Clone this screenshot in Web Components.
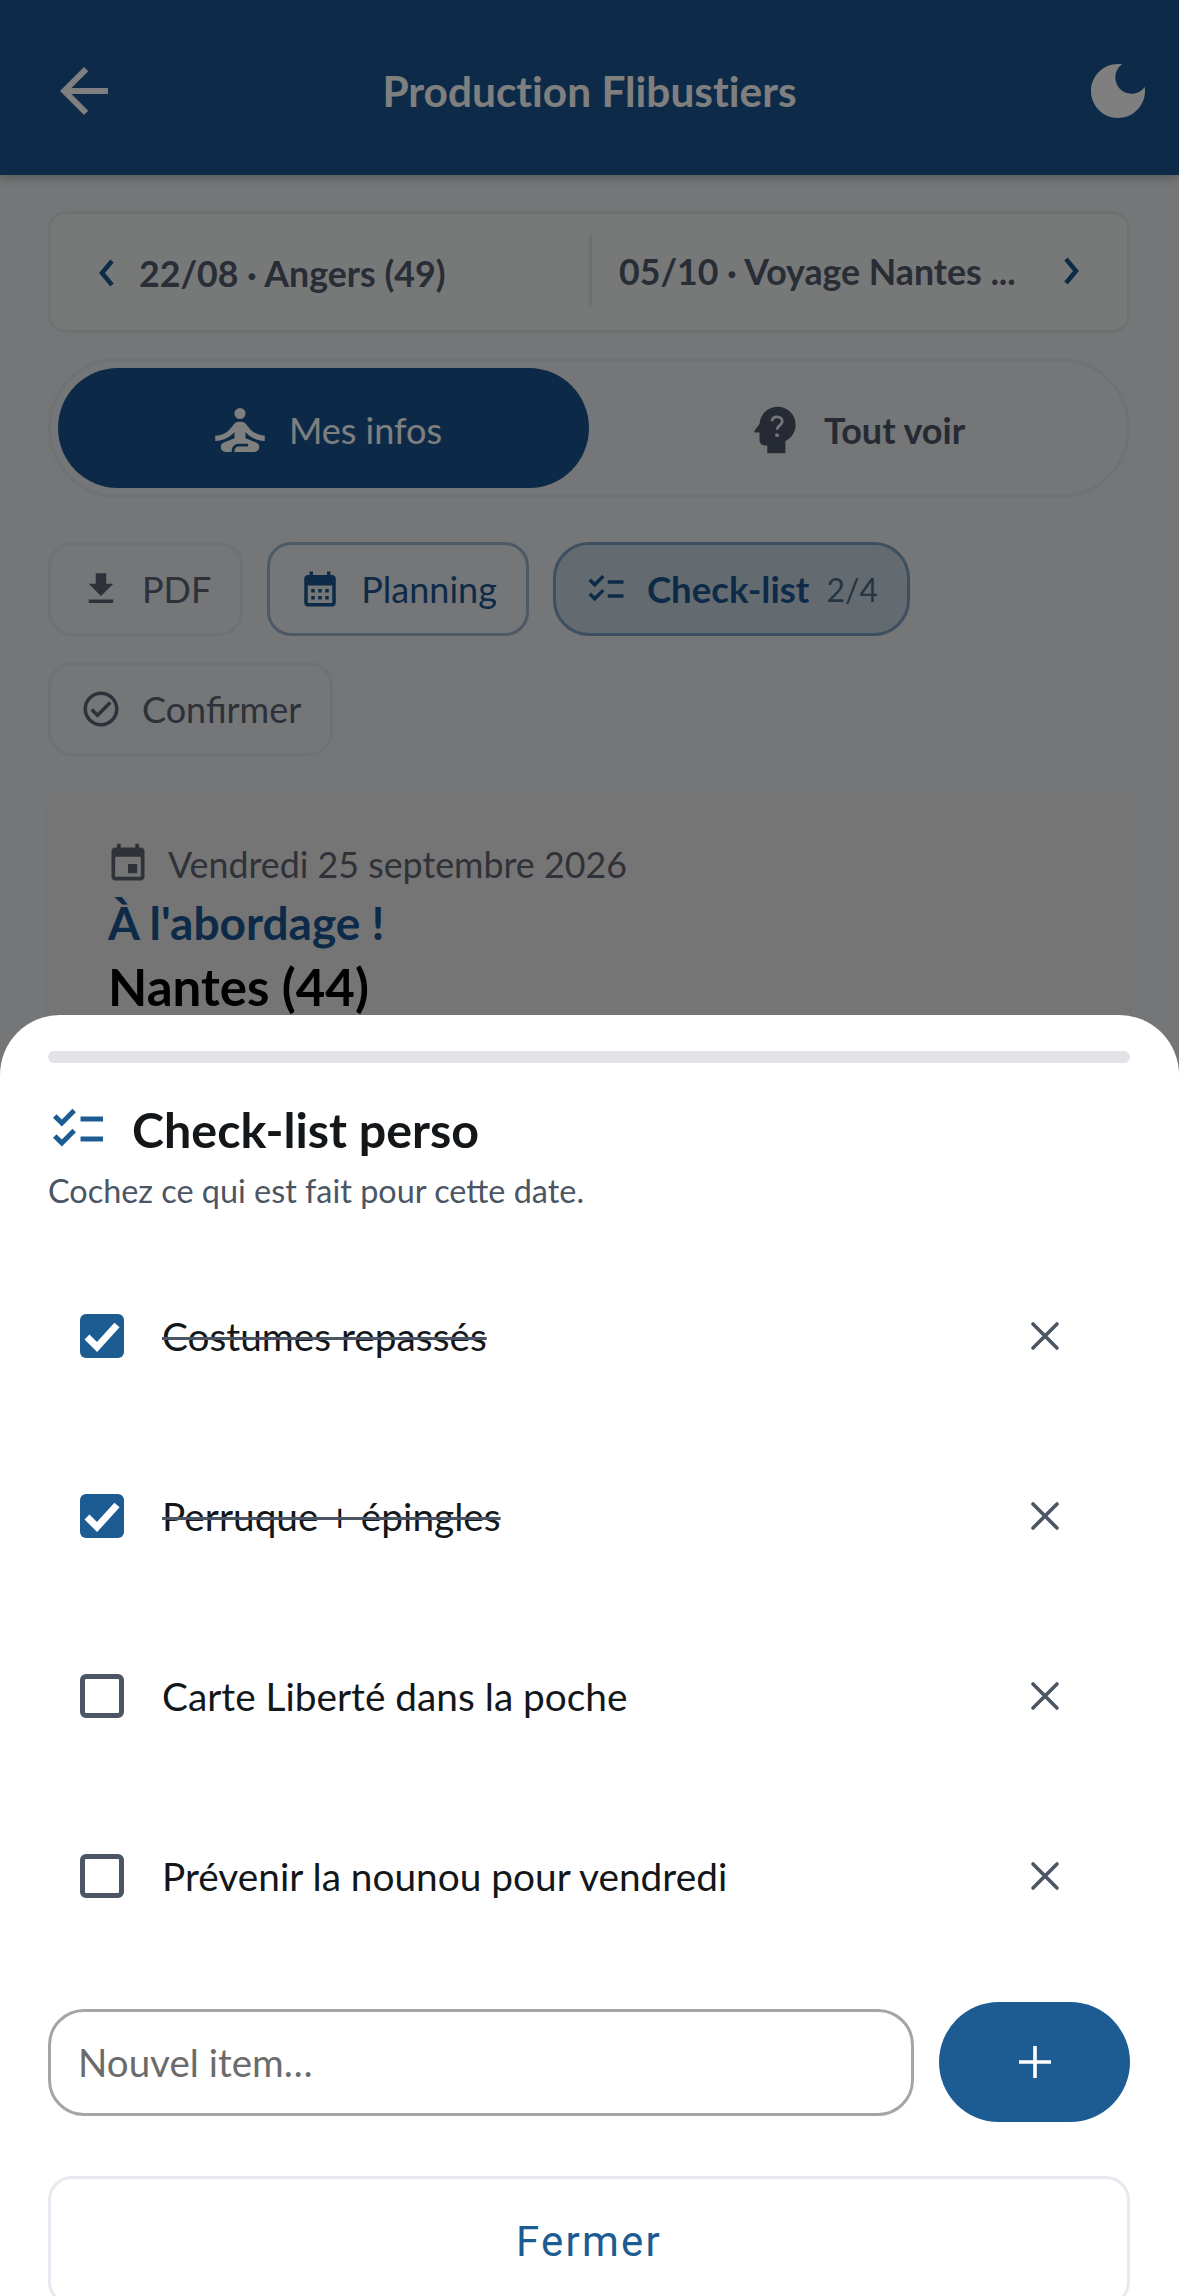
<!DOCTYPE html>
<html lang="fr">
<head>
<meta charset="utf-8">
<title>Production Flibustiers</title>
<style>
    html, body { margin: 0; padding: 0; }
    body { font-family: Lato, "Liberation Sans", sans-serif; background: #e9ecee; }
</style>
</head>
<body>
<screen-frame>
    <app-header slot="page" title="Production Flibustiers"></app-header>
    <date-nav slot="page" prev="22/08 · Angers (49)" next="05/10 · Voyage Nantes ..."></date-nav>
    <view-toggle slot="page"></view-toggle>
    <chip-row slot="page">
        <action-chip icon="download">PDF</action-chip>
        <action-chip icon="calendar" variant="outlined">Planning</action-chip>
        <action-chip icon="checklist" variant="active" count="2/4">Check-list</action-chip>
        <action-chip icon="confirm">Confirmer</action-chip>
    </chip-row>
    <event-card slot="page"
        date="Vendredi 25 septembre 2026"
        name="À l'abordage !"
        place="Nantes (44)"></event-card>

    <checklist-sheet slot="sheet">
        <check-row done>Costumes repassés</check-row>
        <check-row done>Perruque + épingles</check-row>
        <check-row>Carte Liberté dans la poche</check-row>
        <check-row>Prévenir la nounou pour vendredi</check-row>
    </checklist-sheet>
</screen-frame>

<script>
// material style icons, all on a 24 grid
const ICONS = {
    back: `<path d="M20 11H7.83l5.59-5.59L12 4l-8 8 8 8 1.41-1.41L7.83 13H20v-2z"/>`,
    moon: `<path d="M12 3c-4.97 0-9 4.03-9 9s4.03 9 9 9 9-4.03 9-9c0-.46-.04-.92-.1-1.36-.98 1.37-2.58 2.26-4.4 2.26-2.98 0-5.4-2.42-5.4-5.4 0-1.81.89-3.42 2.26-4.4-.44-.06-.9-.1-1.36-.1z"/>`,
    meditate: `<circle cx="12" cy="6" r="2"/><path d="M21 16v-2c-2.24 0-4.16-.96-5.6-2.68l-1.34-1.6c-.38-.46-.94-.72-1.53-.72h-1.05c-.59 0-1.15.26-1.53.72l-1.34 1.6C7.16 13.04 5.24 14 3 14v2c2.77 0 5.19-1.17 7-3.25V15l-3.88 1.55c-.67.27-1.12.93-1.12 1.66C5 19.2 5.8 20 6.79 20H9v-.5c0-1.38 1.12-2.5 2.5-2.5h3c.28 0 .5.22.5.5s-.22.5-.5.5h-3c-.83 0-1.5.67-1.5 1.5v.5h7.21c.99 0 1.79-.8 1.79-1.79 0-.73-.45-1.39-1.12-1.66L14 15v-2.25c1.81 2.08 4.23 3.25 7 3.25z"/>`,
    head: `<path d="M13 3C9.23 3 6.19 5.95 6 9.66L4.08 12.19c-.24.33 0 .81.42.81H6v3c0 1.1.9 2 2 2h1v3h7v-4.68C18.36 15.2 20 12.8 20 10c0-3.87-3.13-7-7-7z"/><path d="M10.8 8.6c.1-1 .9-1.7 2-1.7s2 .7 2 1.8c0 1.5-2 1.6-2 3.2" fill="none" stroke="#e9ecee" stroke-width="1.1"/><circle cx="12.8" cy="14" r=".75" fill="#e9ecee"/>`,
    download: `<path d="M19 9h-4V3H9v6H5l7 7 7-7zM5 18v2h14v-2H5z"/>`,
    calendar: `<path d="M19 4h-1V2h-2v2H8V2H6v2H5c-1.1 0-2 .9-2 2v14c0 1.1.9 2 2 2h14c1.1 0 2-.9 2-2V6c0-1.1-.9-2-2-2zm0 16H5V10h14v10zM9 14H7v-2h2v2zm4 0h-2v-2h2v2zm4 0h-2v-2h2v2zm-8 4H7v-2h2v2zm4 0h-2v-2h2v2zm4 0h-2v-2h2v2z"/>`,
    checklist: `<path d="M22 7h-9v2h9V7zm0 8h-9v2h9v-2zM5.54 11 2 7.46l1.41-1.41 2.12 2.12 4.24-4.24 1.41 1.41L5.54 11zm0 8L2 15.46l1.41-1.41 2.12 2.12 4.24-4.24 1.41 1.41L5.54 19z"/>`,
    confirm: `<path d="M12 2C6.48 2 2 6.48 2 12s4.48 10 10 10 10-4.48 10-10S17.52 2 12 2zm0 18c-4.41 0-8-3.59-8-8s3.59-8 8-8 8 3.59 8 8-3.59 8-8 8zm4.59-12.42L10 14.17l-2.59-2.58L6 13l4 4 8-8z"/>`,
    event: `<path d="M17 12h-5v5h5v-5zM16 1v2H8V1H6v2H5c-1.11 0-1.99.9-1.99 2L3 19c0 1.1.89 2 2 2h14c1.1 0 2-.9 2-2V5c0-1.1-.9-2-2-2h-1V1h-2zm3 18H5V8h14v11z"/>`,
};

function icon(name, size) {
    return `<svg width="${size}" height="${size}" viewBox="0 0 24 24" fill="currentColor" aria-hidden="true">${ICONS[name]}</svg>`;
}

// small helper, every element below has the same shadow setup
class ShadowElement extends HTMLElement {
    constructor() {
        super();
        this.attachShadow({ mode: "open" });
    }
    connectedCallback() {
        this.shadowRoot.innerHTML = this.render();
    }
}

/**
 * Whole screen: the dimmed page underneath, then the scrim and the sheet over it
 */
class ScreenFrame extends ShadowElement {
    render() {
        return `
        <style>
            :host { display: block; position: relative; width: 1179px; height: 2296px; overflow: hidden; }
            .scrim { position: absolute; inset: 0; background: rgba(0, 0, 0, .5); }
        </style>
        <slot name="page"></slot>
        <div class="scrim"></div>
        <slot name="sheet"></slot>`;
    }
}

class AppHeader extends ShadowElement {
    render() {
        return `
        <style>
            :host { display: grid; grid-template-columns: 72px 1fr 72px; align-items: center; box-sizing: border-box;
                height: 175px; padding: 6px 25px 0 48px; background: #1a5690; color: #fff;
                box-shadow: 0 3px 9px rgba(0, 0, 0, .25); }
            h1 { margin: 0 0 0 -23px; text-align: center; font-size: 42.4px; font-weight: 700; font-variant-ligatures: none; }
            svg { display: block; }
        </style>
        <span>${icon("back", 72)}</span>
        <h1>${this.getAttribute("title")}</h1>
        <span>${icon("moon", 72)}</span>`;
    }
}

class DateNav extends ShadowElement {
    render() {
        return `
        <style>
            :host { display: grid; grid-template-columns: 1fr 1fr; box-sizing: border-box; height: 122px;
                margin: 36px 49px 0 48px; align-items: center; background: #eef0f1;
                border: 3px solid #e1e3e5; border-radius: 18px;
                font-size: 35.7px; font-weight: 700; color: #515a6c; }
            div { display: flex; align-items: center; height: 72px; white-space: nowrap; }
            .prev { padding-left: 46px; gap: 22px; position: relative; top: 1px; }
            .next { padding-left: 27px; padding-right: 46px; justify-content: space-between; border-left: 3px solid #dcdfe2; position: relative; top: -1px; }
            svg { flex: none; color: #1a5690; }
        </style>
        <div class="prev">
            <svg width="20" height="34" viewBox="0 0 20 34" fill="none" stroke="currentColor" stroke-width="4.5"><path d="M15 5 5 17l10 12"/></svg>
            <span>${this.getAttribute("prev")}</span>
        </div>
        <div class="next">
            <span>${this.getAttribute("next")}</span>
            <svg width="20" height="34" viewBox="0 0 20 34" fill="none" stroke="currentColor" stroke-width="4.5"><path d="M5 5l10 12L5 29"/></svg>
        </div>`;
    }
}

class ViewToggle extends ShadowElement {
    render() {
        return `
        <style>
            :host { display: grid; grid-template-columns: 1fr 1fr; box-sizing: border-box; height: 140px;
                margin: 25px 49px 0 48px; padding: 7px; background: #e9ecee;
                border: 3px solid #dfe2e5; border-radius: 70px;
                font-size: 36px; font-weight: 700; color: #4d5568; }
            div { display: flex; align-items: center; justify-content: center; gap: 18px; padding-top: 3px; border-radius: 60px; }
            .on { background: #195590; color: #fff; font-weight: 400; gap: 16px; padding-left: 2px; }
            svg { display: block; }
        </style>
        <div class="on">${icon("meditate", 66)}<span>Mes infos</span></div>
        <div>${icon("head", 62)}<span>Tout voir</span></div>`;
    }
}

class ChipRow extends ShadowElement {
    render() {
        return `
        <style>
            :host { display: flex; flex-wrap: wrap; gap: 26px 24px; margin: 44px 49px 0 48px; }
        </style>
        <slot></slot>`;
    }
}

class ActionChip extends ShadowElement {
    render() {
        const count = this.getAttribute("count");
        return `
        <style>
            :host { display: inline-flex; align-items: center; gap: 20px; box-sizing: border-box; height: 94px;
                padding: 0 29px; background: #e9ecee; border: 3px solid #dfe2e5; border-radius: 24px;
                font-size: 36px; color: #5a6273; }
            :host([variant="outlined"]) { color: #1a5690; border-color: #9bb4cc; }
            :host([variant="active"]) { color: #1a5690; border-color: #7d9fbf; background: #c9d6e1; border-radius: 36px; font-weight: 700; font-size: 36.6px; }
            svg { display: block; }
            .count { margin-left: -3px; font-size: 32px; font-weight: 400; color: #4d6a86; }
        </style>
        ${icon(this.getAttribute("icon"), 42)}
        <span><slot></slot></span>
        ${count ? `<span class="count">${count}</span>` : ""}`;
    }
}

class EventCard extends ShadowElement {
    render() {
        return `
        <style>
            :host { display: block; box-sizing: border-box; margin: 37px 49px 0 49px; height: 600px; padding: 44px 59px;
                background: #ebebea; border-radius: 12px; box-shadow: 0 0 6px rgba(0, 0, 0, .05); }
            .date { display: flex; align-items: center; gap: 18px; margin-left: -2px; height: 54px; font-size: 35.8px; color: #5e6472; }
            svg { display: block; }
            h2, h3 { margin: 0; font-weight: 700; line-height: 64px; }
            h2 { font-size: 46px; color: #1a5690; }
            h3 { font-size: 51px; color: #000; }
        </style>
        <div class="date">${icon("event", 44)}<span>${this.getAttribute("date")}</span></div>
        <h2>${this.getAttribute("name")}</h2>
        <h3>${this.getAttribute("place")}</h3>`;
    }
}

class ChecklistSheet extends ShadowElement {
    render() {
        return `
        <style>
            :host { display: block; position: absolute; left: 0; right: 0; top: 1015px; bottom: 0; box-sizing: border-box;
                padding: 36px 49px 0 48px; background: #fff; border-radius: 60px 60px 0 0; overflow: hidden; color: #14171a; }
            .handle { height: 12px; border-radius: 6px; background: #e1e3e6; }
            .head { display: flex; align-items: center; gap: 24px; margin-top: 36px; height: 60px; }
            .head svg { display: block; color: #1d5c92; }
            h2 { margin: 0; font-size: 48.4px; font-weight: 700; }
            p { margin: 10px 0 0; font-size: 32.4px; line-height: 44px; color: #4b5563; }
            .list { display: block; margin-top: 33px; }
            add-item { margin-top: 36px; }
            button { display: block; box-sizing: border-box; width: 100%; height: 130px; margin-top: 54px;
                font: 400 42px Roboto, sans-serif; letter-spacing: 2.2px; color: #1d5c92;
                background: #fff; border: 3px solid #e6eaf0; border-radius: 24px; }
        </style>
        <div class="handle"></div>
        <div class="head">${icon("checklist", 60)}<h2>Check-list perso</h2></div>
        <p>Cochez ce qui est fait pour cette date.</p>
        <div class="list"><slot></slot></div>
        <add-item></add-item>
        <button>Fermer</button>`;
    }
}

class CheckRow extends ShadowElement {
    render() {
        return `
        <style>
            :host { display: flex; align-items: center; box-sizing: border-box; height: 180px; padding: 0 70px 0 32px; font-size: 38.8px; color: #14171a; }
            .box { flex: none; display: flex; box-sizing: border-box; width: 44px; height: 44px; margin-right: 38px;
                border: 5px solid #4b5563; border-radius: 6px; }
            :host([done]) .box { background: #1d5c92; border: 0; }
            :host([done]) .label { text-decoration: line-through; text-decoration-color: #4b5563; text-decoration-thickness: 3px; }
            .label { flex: 1; }
            svg { display: block; }
            .x { flex: none; color: #4b5563; }
        </style>
        <span class="box">${this.hasAttribute("done") ? `<svg width="44" height="44" viewBox="0 0 44 44" fill="none" stroke="#fff" stroke-width="7"><path d="M7 23l10 10L37 11"/></svg>` : ""}</span>
        <span class="label"><slot></slot></span>
        <svg class="x" width="30" height="30" viewBox="0 0 30 30" fill="none" stroke="currentColor" stroke-width="3.6" stroke-linecap="round"><path d="M3 3l24 24M27 3 3 27"/></svg>`;
    }
}

class AddItem extends ShadowElement {
    render() {
        return `
        <style>
            :host { display: flex; align-items: center; gap: 25px; }
            .field { flex: 1; box-sizing: border-box; height: 107px; padding: 0 27px; display: flex; align-items: center;
                border: 3px solid #a5a5a5; border-radius: 36px; font-size: 38.5px; color: #6b6b6b; background: #fff; }
            .add { flex: none; display: flex; align-items: center; justify-content: center; width: 191px; height: 120px;
                border-radius: 60px; background: #1d5c92; }
            svg { display: block; }
        </style>
        <div class="field">Nouvel item…</div>
        <div class="add"><svg width="34" height="34" viewBox="0 0 34 34" fill="none" stroke="#fff" stroke-width="3.6"><path d="M17 1v32M1 17h32"/></svg></div>`;
    }
}

customElements.define("screen-frame", ScreenFrame);
customElements.define("app-header", AppHeader);
customElements.define("date-nav", DateNav);
customElements.define("view-toggle", ViewToggle);
customElements.define("chip-row", ChipRow);
customElements.define("action-chip", ActionChip);
customElements.define("event-card", EventCard);
customElements.define("checklist-sheet", ChecklistSheet);
customElements.define("check-row", CheckRow);
customElements.define("add-item", AddItem);
</script>
</body>
</html>
